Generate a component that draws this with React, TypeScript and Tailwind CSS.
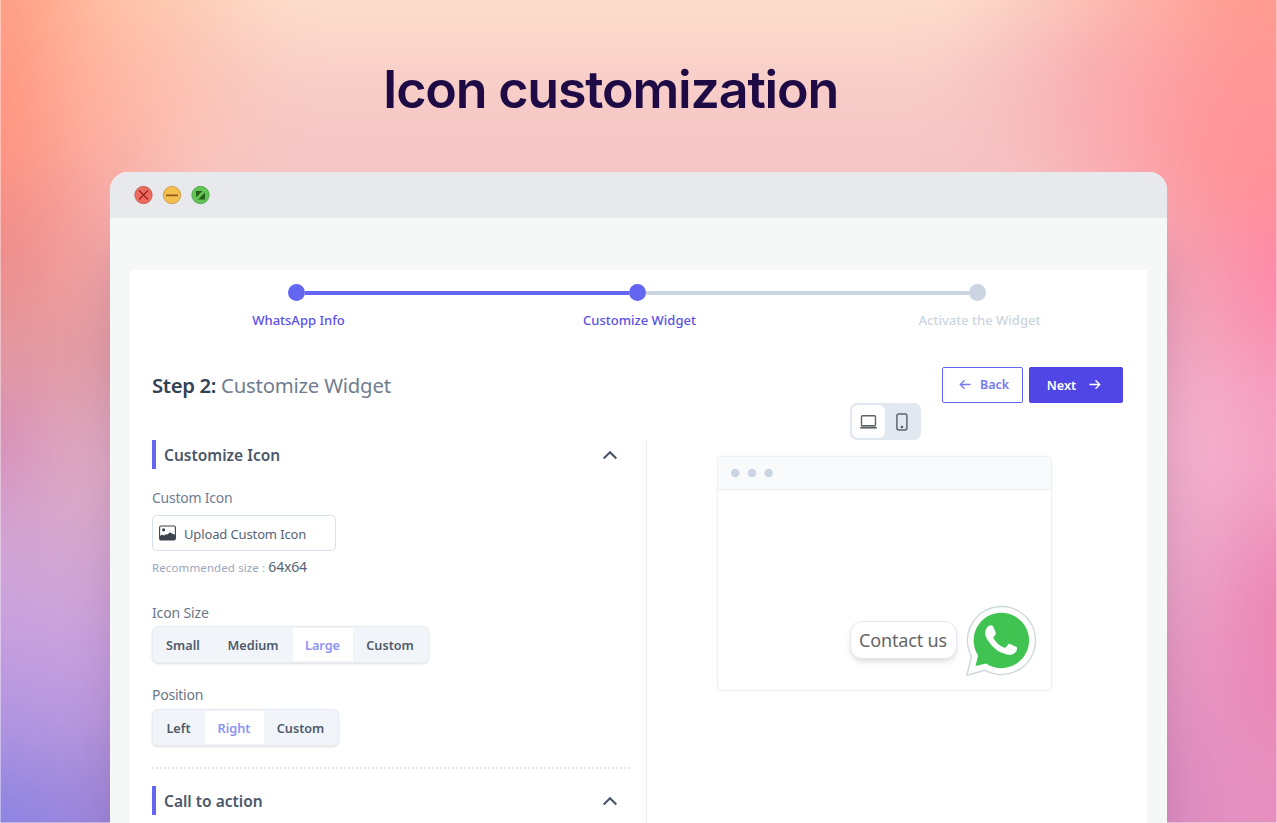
import React from "react";

const noto = "font-['Noto_Sans',sans-serif]";

function Chevron() {
  return (
    <svg width="16" height="10" viewBox="0 0 16 10" fill="none" stroke="#475569" strokeWidth="2.1">
      <path d="M1.7 8.5 8 2.2l6.3 6.3" />
    </svg>
  );
}

function SectionHead({ title }: { title: string }) {
  return (
    <div className="flex h-[29px] items-center justify-between border-l-4 border-[#6366f1] pl-[8px] pr-[12px]">
      <span className="pt-[2px] text-[15.5px] font-semibold text-[#4b586a]">{title}</span>
      <Chevron />
    </div>
  );
}

function Segment({ items, active, widths }: { items: string[]; active: string; widths: string[] }) {
  return (
    <div className="flex h-[37px] w-max rounded-[6px] border border-[#e7ecf3] bg-[#f1f5f9] py-px shadow-sm">
      {items.map((t, i) => (
        <div
          key={t}
          className={`flex items-center justify-center pr-px pt-[2px] text-[12.7px] font-semibold ${widths[i]} ${t === active ? "bg-white text-[#8b92f9]" : "text-[#4f5b6b]"}`}
        >
          {t}
        </div>
      ))}
    </div>
  );
}

function Arrow({ flip }: { flip?: boolean }) {
  return (
    <svg className={flip ? "rotate-180" : ""} width="12" height="11" viewBox="0 0 12 11" fill="none" stroke="currentColor" strokeWidth="1.3">
      <path d="M.5 5.5H10.700M6.500 1.300l4.200 4.200L6.500 9.700" />
    </svg>
  );
}

export default function App() {
  return (
    <div className={`relative h-[823px] w-[1277px] overflow-hidden bg-[#f3c0c4] ${noto}`}>
      <svg className="absolute inset-0" width="1277" height="823">
        <defs>
          <filter id="soft" filterUnits="userSpaceOnUse" x="-400" y="-400" width="2100" height="1700" colorInterpolationFilters="sRGB">
            <feGaussianBlur stdDeviation="42" />
          </filter>
          <filter id="shade" x="-20%" y="-20%" width="140%" height="140%" colorInterpolationFilters="sRGB">
            <feGaussianBlur stdDeviation="24" />
          </filter>
        </defs>
        <g filter="url(#soft)">
          <rect x="-300" y="-300" width="1900" height="1500" fill="#f4c5c6" />
          <rect x="-300" y="-300" width="1900" height="310" fill="#ffe2cc" />
          <rect x="140" y="10" width="870" height="60" fill="#fad5ca" />
          <rect x="140" y="70" width="870" height="50" fill="#f8cbc7" />
          <rect x="-300" y="-300" width="360" height="350" fill="#ff9e84" />
          <rect x="60" y="-300" width="90" height="330" fill="#ffc3a6" />
          <rect x="150" y="-300" width="90" height="330" fill="#fdd0b8" />
          <rect x="-300" y="50" width="350" height="150" fill="#ff937f" />
          <rect x="50" y="30" width="110" height="130" fill="#ffb5a2" />
          <rect x="160" y="30" width="90" height="150" fill="#fbc4b8" />
          <rect x="-300" y="200" width="350" height="110" fill="#ed8a89" />
          <rect x="50" y="160" width="100" height="150" fill="#f5a5a3" />
          <rect x="-300" y="310" width="460" height="90" fill="#e29aa2" />
          <rect x="-300" y="400" width="340" height="80" fill="#d588b7" />
          <rect x="40" y="400" width="150" height="120" fill="#e0adc4" />
          <rect x="-300" y="480" width="340" height="80" fill="#d1a2d0" />
          <rect x="40" y="520" width="150" height="100" fill="#d3a7d4" />
          <rect x="-300" y="560" width="340" height="90" fill="#cba3dd" />
          <rect x="40" y="620" width="150" height="90" fill="#c59ee0" />
          <rect x="-300" y="650" width="340" height="80" fill="#b898e0" />
          <rect x="40" y="710" width="150" height="70" fill="#b295dc" />
          <rect x="-300" y="730" width="340" height="70" fill="#a38de2" />
          <rect x="-300" y="790" width="340" height="300" fill="#8381e3" />
          <rect x="40" y="780" width="150" height="300" fill="#9b84dc" />
          <rect x="1010" y="-300" width="90" height="320" fill="#fccdbd" />
          <rect x="1100" y="-300" width="90" height="340" fill="#ffb4a5" />
          <rect x="1190" y="-300" width="400" height="350" fill="#ff9b90" />
          <rect x="980" y="20" width="90" height="180" fill="#f7bdbf" />
          <rect x="1070" y="20" width="100" height="180" fill="#fba7ad" />
          <rect x="1170" y="50" width="410" height="70" fill="#ff969a" />
          <rect x="1170" y="120" width="410" height="100" fill="#ff9396" />
          <rect x="1080" y="220" width="160" height="70" fill="#f7a0b1" />
          <rect x="1240" y="220" width="400" height="120" fill="#ff83a7" />
          <rect x="1080" y="290" width="160" height="90" fill="#f2a7bf" />
          <rect x="1240" y="340" width="400" height="90" fill="#f79abc" />
          <rect x="1080" y="380" width="160" height="110" fill="#f4b3cd" />
          <rect x="1240" y="430" width="400" height="100" fill="#f49fc2" />
          <rect x="1080" y="490" width="150" height="120" fill="#edaacb" />
          <rect x="1230" y="530" width="400" height="190" fill="#ec84b3" />
          <rect x="1080" y="610" width="150" height="120" fill="#e79ac4" />
          <rect x="1080" y="730" width="150" height="400" fill="#df8fc2" />
          <rect x="1230" y="720" width="400" height="400" fill="#e78fbd" />
        </g>
        <rect x="112" y="250" width="1053" height="650" fill="#5b2a60" opacity=".22" filter="url(#shade)" />
        <path d="M.5 0V823M0 822.500H1277M1276.500 0V823" stroke="#fff" strokeOpacity=".4" />
      </svg>

      <div className="relative flex flex-col">
        <h1 className="h-[172px] pl-[383px] pt-[55px] font-['Inter',sans-serif] text-[52px] font-semibold leading-[70px] tracking-[-1.2px] text-[#1e0a45]">
          Icon customization
        </h1>

        <main className="ml-[110px] h-[651px] w-[1057px] overflow-hidden rounded-t-[18px] bg-[#f6f8f8]">
          <div className="flex h-[46px] items-center bg-[#e8e9ed] pl-[24px]">
            <svg width="78" height="20" viewBox="0 0 78 20">
              <circle cx="9.5" cy="10" r="8.7" fill="#ed6a5e" stroke="#b5544c" strokeWidth=".7" />
              <path d="m5 5.500 9 9m0-9-9 9" stroke="#9c2018" strokeWidth="1.1" />
              <circle cx="38" cy="10" r="8.7" fill="#f5bf4f" stroke="#b8903e" strokeWidth=".7" />
              <path d="M32 10.300h12" stroke="#8f591d" strokeWidth="1.8" />
              <circle cx="66.5" cy="10" r="8.7" fill="#61c555" stroke="#499942" strokeWidth=".7" />
              <path d="M62 12.500V6h6.500ZM71 7.500V14.500h-7Z" fill="#285f1a" />
            </svg>
          </div>

          <div className="ml-[20px] mt-[52px] h-[553px] w-[1017px] bg-white">
            <div className="flex h-[45px] items-center pl-[158px]">
              <i className="size-[17px] rounded-full bg-[#6366f1]" />
              <i className="h-[4px] w-[324px] bg-[#6366f1]" />
              <i className="size-[17px] rounded-full bg-[#6366f1]" />
              <i className="h-[4px] w-[323px] bg-[#cbd5e1]" />
              <i className="size-[17px] rounded-full bg-[#cbd5e1]" />
            </div>
            <div className="flex h-[11px] items-center text-[13px] font-medium">
              <span className="w-[337px] text-center text-[#5b50e8]">WhatsApp Info</span>
              <span className="w-[345px] text-center text-[#5b50e8]">Customize Widget</span>
              <span className="w-[335px] text-center text-[#cbd5e1]">Activate the Widget</span>
            </div>

            <div className="mt-[40px] flex h-[37px] items-center pl-[22px] pr-[24px]">
              <h2 className="flex-1 pt-[2px] text-[20.3px] tracking-[-0.2px] text-[#6f7d90]">
                <b className="font-semibold tracking-[-0.35px] text-[#334155]">Step 2:</b> Customize Widget
              </h2>
              <button className="flex h-[36px] w-[81px] items-center justify-center gap-[9px] rounded-[2px] border border-[#6366f1] pl-[3px] text-[12.500px] font-semibold text-[#7679f3]">
                <Arrow flip /> <span className="pt-[2px]">Back</span>
              </button>
              <button className="ml-[6px] flex h-[36px] w-[94px] items-center justify-center gap-[13px] rounded-[2px] bg-[#4f46e5] pr-[4px] text-[12.700px] font-semibold text-white">
                <span className="pt-[2px]">Next</span> <Arrow />
              </button>
            </div>

            <div className="flex">
              <div className="mt-[37px] h-[400px] w-[517px] border-r border-[#eceff6] pl-[22px] pr-[16px]">
                <SectionHead title="Customize Icon" />
                <p className="mt-[19px] text-[14px] leading-[20px] tracking-[-0.25px] text-[#6f7d90]">Custom Icon</p>
                <button className="mt-[7px] flex h-[36px] w-[184px] items-center gap-[8px] rounded-[5px] border border-[#d9e1ea] pl-[6px] text-[13px] tracking-[-0.13px] text-[#566375]">
                  <svg width="17" height="17" viewBox="0 0 17 17">
                    <rect x=".6" y="1" width="15.800" height="14" rx="1.5" fill="none" stroke="#3b444d" strokeWidth="1.1" />
                    <circle cx="4.600" cy="4.800" r="1.600" fill="#3b444d" />
                    <path d="M1 11 2.800 9.800C3.500 9.400 4 10.400 5 10.400S6.300 9 7.300 9.300 8.600 9.500 9.500 8.500 11.500 7.200 12.500 8.200L16 9.800V15H1Z" fill="#3b444d" />
                  </svg>
                  <span className="pt-[3px]">Upload Custom Icon</span>
                </button>
                <p className="mt-[6px] whitespace-nowrap text-[11.500px] leading-[20px] tracking-[0.11px] text-[#9aa8bb]">
                  Recommended size : <span className="text-[14px] tracking-[-0.2px] text-[#566375]">64x64</span>
                </p>
                <p className="mt-[25px] text-[14px] leading-[20px] tracking-[-0.15px] text-[#6a778a]">Icon Size</p>
                <div className="mt-[3px]">
                  <Segment items={["Small", "Medium", "Large", "Custom"]} active="Large" widths={["w-[61px]", "w-[79px]", "w-[60px]", "w-[75px]"]} />
                </div>
                <p className="mt-[22px] text-[14px] leading-[20px] tracking-[-0.25px] text-[#6a778a]">Position</p>
                <div className="mt-[4px]">
                  <Segment items={["Left", "Right", "Custom"]} active="Right" widths={["w-[52px]", "w-[59px]", "w-[74px]"]} />
                </div>
                <div className="mb-[17px] mt-[21px] border-t-2 border-dotted border-[#e2e8f0]" />
                <SectionHead title="Call to action" />
              </div>

              <div className="flex flex-1 flex-col pl-[70px]">
                <div className="ml-[133px] flex h-[37px] w-[71px] items-center rounded-[7px] border border-[#e2e8f0] bg-[#e2e8f0] px-[1px]">
                  <div className="flex h-[33px] w-[33px] items-center justify-center rounded-[6px] bg-white">
                    <svg width="17" height="14" viewBox="0 0 17 14">
                      <rect x="1.500" y=".8" width="14" height="10" rx="1" fill="none" stroke="#5a6368" strokeWidth="1.4" />
                      <path d="M.3 11.700h16.400v1.900H.3Z" fill="#5a6368" />
                    </svg>
                  </div>
                  <div className="flex h-[33px] w-[33px] items-center justify-center">
                    <svg width="12" height="18" viewBox="0 0 12 18">
                      <rect x=".9" y=".9" width="10" height="16" rx="1.800" fill="none" stroke="#5b6673" strokeWidth="1.500" />
                      <circle cx="5.900" cy="14" r="1.300" fill="#475569" />
                    </svg>
                  </div>
                </div>

                <div className="mt-[16px] flex h-[235px] w-[335px] flex-col rounded-[4px] border border-[#edf1f7] shadow-[0_0_2px_#eaeff5]">
                  <div className="flex h-[33px] items-center border-b border-[#e9eef4] bg-[#f8fafc] pl-[13px]">
                    <svg width="42" height="10" viewBox="0 0 42 10" fill="#cbd5e1">
                      <circle cx="4.200" cy="5" r="4.300" />
                      <circle cx="21" cy="5" r="4.300" />
                      <circle cx="37.600" cy="5" r="4.300" />
                    </svg>
                  </div>
                  <div className="flex flex-1 items-end justify-end pb-[14px] pr-[15.5px]">
                    <div className="mb-[17px] mr-[9px] flex h-[38px] w-[107px] items-center justify-center rounded-[12px] border border-[#e2e8f0] bg-white text-[18px] tracking-[-0.15px] text-[#666] shadow-md">
                      Contact us
                    </div>
                    <svg width="70" height="71" viewBox="0 0 70 71">
                      <path d="M.9 70.200 5.500 51.500A34 34 0 1 1 19 65.200Z" fill="#fff" stroke="#cfd8dc" strokeWidth="1.500" strokeLinejoin="round" />
                      <path d="m9.500 61 2.600-10.500A27.700 27.700 0 1 1 20 58.500Z" fill="#40c351" />
                      <path transform="translate(-4.500 -4.700) scale(1.65)" fill="#fff" d="M19.268 16.045c-.355-.79-.729-.806-1.068-.82-.277-.012-.593-.011-.909-.011s-.83.119-1.265.594-1.661 1.622-1.661 3.956 1.700 4.590 1.937 4.906c.237.316 3.282 5.259 8.104 7.161 4.007 1.580 4.823 1.266 5.693 1.187s2.807-1.147 3.202-2.255.395-2.057.277-2.255c-.119-.198-.435-.316-.909-.554s-2.807-1.385-3.242-1.543-.751-.237-1.068.238c-.316.474-1.225 1.543-1.502 1.859s-.554.357-1.028.119-2.002-.738-3.815-2.354c-1.410-1.257-2.362-2.810-2.639-3.285-.277-.474-.030-.731.208-.968.213-.213.474-.554.712-.831.237-.277.316-.475.474-.791s.079-.594-.040-.831c-.117-.238-1.038-2.584-1.461-3.522z" />
                    </svg>
                  </div>
                </div>
              </div>
            </div>
          </div>
        </main>
      </div>
    </div>
  );
}
